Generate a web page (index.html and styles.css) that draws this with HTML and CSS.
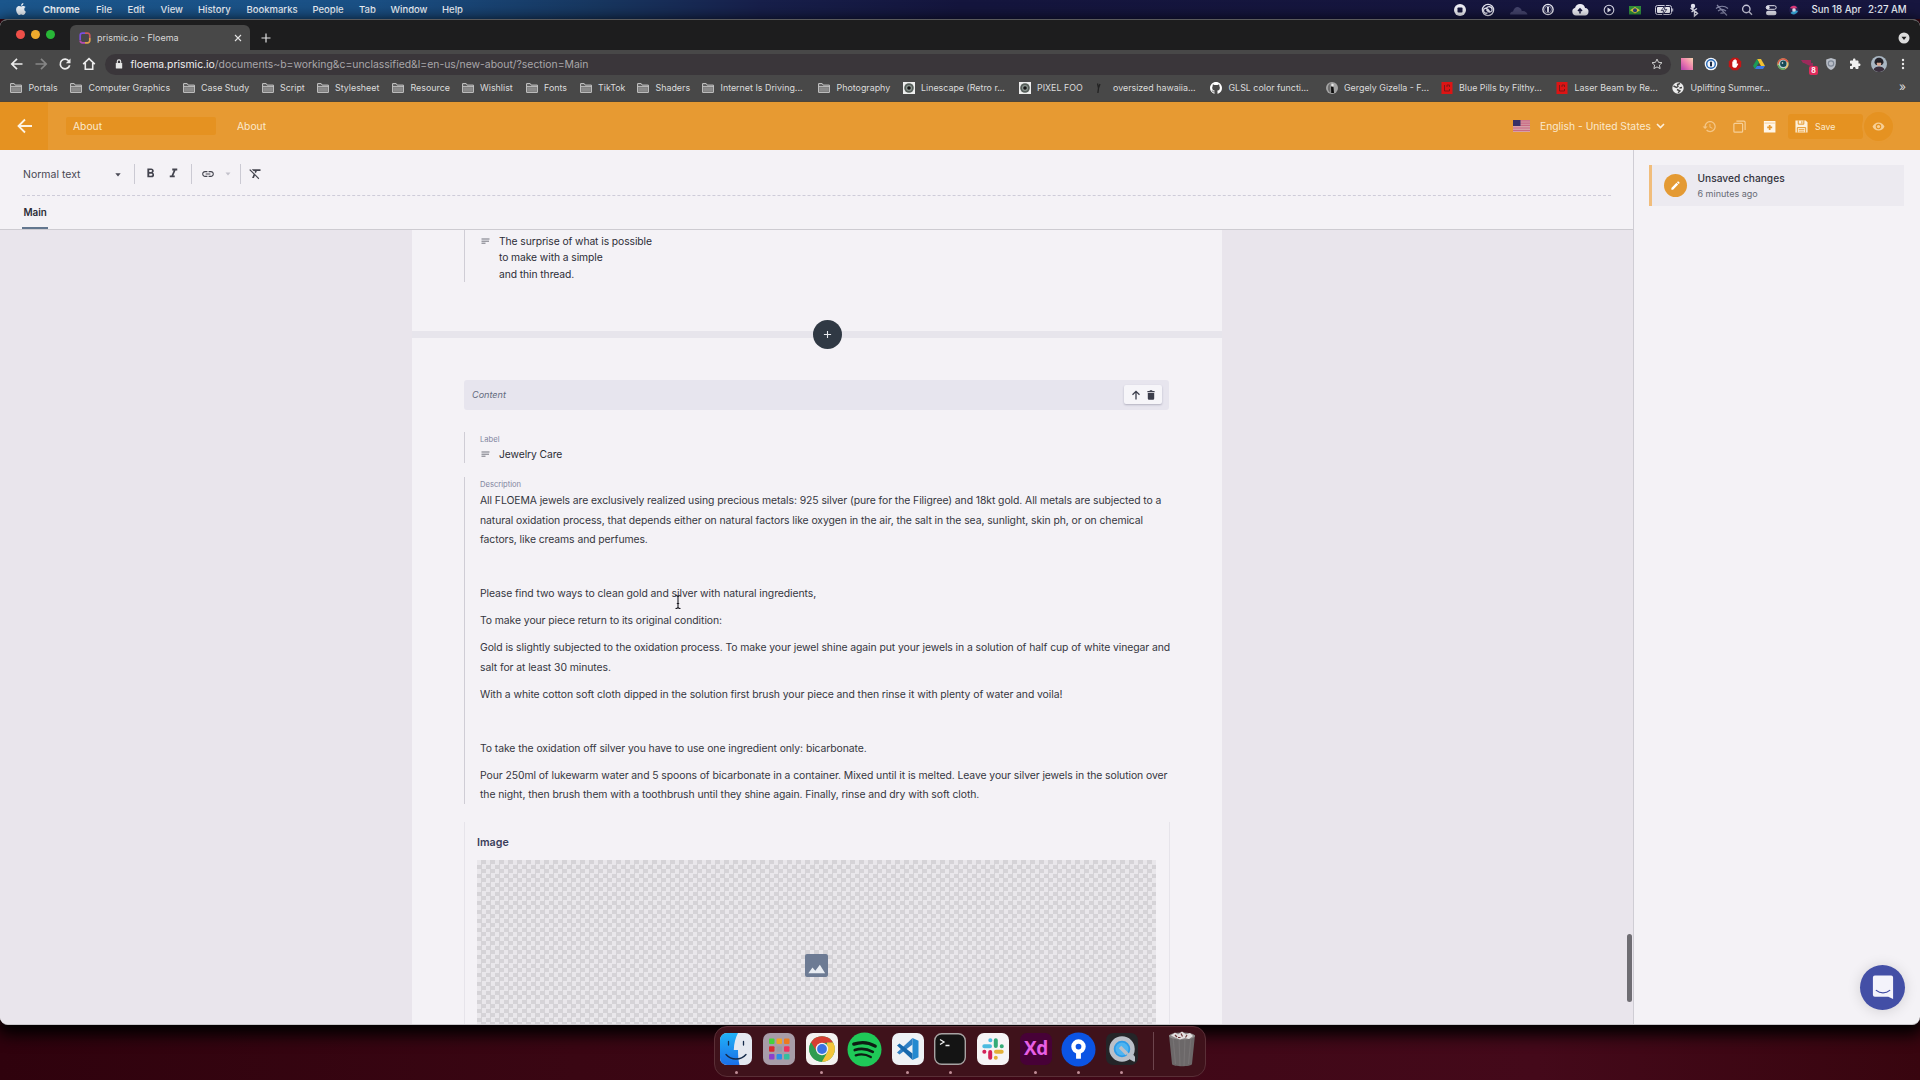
FILE: index.html
```html
<!DOCTYPE html>
<html lang="en">
<head>
<meta charset="utf-8">
<title>prismic.io - Floema</title>
<link rel="stylesheet" href="styles.css">
</head>
<body>
<svg class="defs" aria-hidden="true">
  <symbol id="folder" viewBox="0 0 12 12"><path d="M.6 10.400V1.600h3.600l1 1.500h6.200v7.300z" fill="#5c5c5c" stroke="#c9c9c9" stroke-width="1"/><path d="M1 4.600h10.500" stroke="#c9c9c9" stroke-width=".9"/><path d="M1.200 5.200h9.600v4.600H1.200z" fill="#8a8a8a"/></symbol>
  <symbol id="eyeicon" viewBox="0 0 12 12"><path d="M0 0h12v12H0z" fill="#eee"/><circle cx="6" cy="6" r="4.800" fill="#555d58"/><circle cx="6" cy="6" r="3" fill="#8b9590"/><circle cx="6" cy="6" r="1.800" fill="#161616"/></symbol>
  <symbol id="redbox" viewBox="0 0 12 12"><path d="M.5 0h11v12H.5z" fill="#dc1414"/><path d="M3.500 3v6h5V7M8.500 5V3H6v2" fill="none" stroke="#7d1717" stroke-width="1"/></symbol>
  <symbol id="onep" viewBox="0 0 16 16"><circle cx="8" cy="8" r="6.300" fill="none" stroke="currentColor" stroke-width="1.700"/><rect x="6.900" y="4.200" width="2.200" height="7.600" rx="1" fill="currentColor"/><circle cx="8" cy="8" r="4.300" fill="none" stroke="currentColor" stroke-width=".6"/></symbol>
  <symbol id="lines" viewBox="0 0 9 8"><path d="M.5 2h8M.5 4.200h7.500M.5 6.200h4" stroke="#73757f" stroke-width="1"/></symbol>
</svg>

<header class="menubar">
  <nav class="menus">
    <svg class="apple" viewBox="0 0 24 24" fill="#eaf0f7"><path d="M12.152 6.896c-.948 0-2.415-1.078-3.960-1.040-2.040.027-3.910 1.183-4.961 3.014-2.117 3.675-.546 9.103 1.519 12.090 1.013 1.454 2.208 3.090 3.792 3.039 1.520-.065 2.090-.987 3.935-.987 1.831 0 2.350.987 3.960.948 1.637-.026 2.676-1.480 3.676-2.948 1.156-1.688 1.636-3.325 1.662-3.415-.039-.013-3.182-1.221-3.220-4.857-.026-3.040 2.480-4.494 2.597-4.559-1.429-2.090-3.623-2.324-4.390-2.376-2-.156-3.675 1.090-4.610 1.090zM15.530 3.830c.843-1.012 1.400-2.427 1.245-3.830-1.207.052-2.662.805-3.532 1.818-.780.896-1.454 2.338-1.273 3.714 1.338.104 2.715-.688 3.559-1.701"/></svg>
    <b>Chrome</b><span>File</span><span>Edit</span><span>View</span><span>History</span><span>Bookmarks</span><span>People</span><span>Tab</span><span>Window</span><span>Help</span>
  </nav>
  <div class="status">
    <svg viewBox="0 0 20 16"><circle cx="10" cy="8" r="6" fill="#f1f1f8"/><rect x="7.500" y="5.500" width="5" height="5" rx=".8" fill="#16163d"/></svg>
    <svg viewBox="0 0 20 16" fill="none" stroke="#e4e4f0"><circle cx="10" cy="8" r="5.600" stroke-width="1.300"/><path d="M9.500 10.800a2.600 2.600 0 01-4-2.300c0-2.300 2.800-3 4.300-1.300l2.200 2.600M8.500 6.300c1.300-2.400 5-2 5.600.7.500 2.500-2.500 4-4.200 2.200L8.300 7.600" stroke-width="1.300"/></svg>
    <svg viewBox="0 0 20 16" fill="#44446c"><path d="M1 12.500c0-2 1.500-3 3-3C5 6 8 3.500 11 6c1.300 1 1.700 2 1.700 3.200 3-.6 5.500 1 5.800 3.300z"/></svg>
    <svg class="onepass" viewBox="0 0 16 16" color="#ececf6"><use href="#onep"/></svg>
    <svg viewBox="0 0 20 16"><path d="M6 13.500a4 4 0 01-.9-7.800 5.200 5.200 0 0110 .4 3.700 3.700 0 01-.6 7.400z" fill="#f1f1f8"/><path d="M10 11.500V7.500M8 9l2-2.200L12 9" fill="none" stroke="#16163d" stroke-width="1.500"/></svg>
    <svg viewBox="0 0 20 16"><circle cx="10" cy="8" r="4.800" fill="none" stroke="#dcdcec" stroke-width="1.100"/><path d="M8.500 5.500L12.300 8 8.500 10.500z" fill="#ececf6"/></svg>
    <svg viewBox="0 0 20 16"><path d="M4 4h12v8.500H4z" fill="#2f8f3c"/><path d="M10 5l5 3.200-5 3.200-5-3.200z" fill="#e2cf3b"/><circle cx="10" cy="8.200" r="2" fill="#2a3a86"/></svg>
    <svg viewBox="0 0 20 16"><rect x="1.500" y="3.500" width="16" height="9" rx="2" fill="none" stroke="#cfcfe0"/><rect x="3" y="5" width="13" height="6" rx="1" fill="#f1f1f8"/><path d="M11.500 3L7.200 8.600h2.500L8.500 13l4.300-5.600h-2.500z" fill="#f1f1f8" stroke="#16163d" stroke-width=".8"/><path d="M18.700 6.500v3" stroke="#cfcfe0"/></svg>
    <svg viewBox="0 0 20 16" fill="none" stroke="#e6e6f2" stroke-width="1.400"><circle cx="9" cy="4" r="1.500" fill="#e6e6f2"/><path d="M6.500 6l5.500 4.500M9 5.500V9l4-2.500M9 9l-1.500 1M10.500 9.500v4.500l3-2.500-2-2"/></svg>
    <svg viewBox="0 0 20 16" fill="none" stroke="#8688a8" stroke-width="1.200"><path d="M4 6.500c3.500-3 8.500-3 12 0M6 9c2.400-2 5.600-2 8 0M8.500 11.500c1-.8 2-.8 3 0M5 3l10 10.500"/></svg>
    <svg viewBox="0 0 20 16" fill="none" stroke="#c9c9dc" stroke-width="1.400"><circle cx="9.300" cy="7" r="3.700"/><path d="M12 9.800l3 3"/></svg>
    <svg viewBox="0 0 20 16"><rect x="5.200" y="3.700" width="10" height="3.600" rx="1.800" fill="none" stroke="#e6e6f2"/><circle cx="7" cy="5.500" r="1.700" fill="#e6e6f2"/><rect x="5" y="8.800" width="10.500" height="4.400" rx="2.200" fill="#e6e6f2"/></svg>
    <svg viewBox="0 0 20 16"><circle cx="10" cy="8" r="4.700" fill="#2b2358"/><path d="M6 6c2-3 6-3 7 0l-3 1z" fill="#e2387a"/><path d="M6.500 11c2 2.500 6 1.500 7.500-2l-4-1z" fill="#3bb3e8"/><circle cx="10" cy="8" r="1.800" fill="#e9e9fa"/></svg>
    <span>Sun 18 Apr</span><span>2:27 AM</span>
  </div>
</header>

<main class="window">
  <div class="tabstrip">
    <div class="lights"><i></i><i></i><i></i></div>
    <div class="tab">
      <svg class="favicon" viewBox="0 0 12 12" fill="none" stroke-width="1.700"><path d="M1.200 8V3.500a2.300 2.300 0 012.300-2.300H6" stroke="#7a4fe0"/><path d="M6 1.200h2.500a2.300 2.300 0 012.300 2.300V6" stroke="#c9585a"/><path d="M10.800 6v2.500a2.300 2.300 0 01-2.300 2.300H6" stroke="#e0a24a"/><path d="M6 10.800H3.500a2.300 2.300 0 01-2.300-2.300" stroke="#b64bb0"/></svg>
      <span>prismic.io - Floema</span>
      <svg class="close" viewBox="0 0 8 8"><path d="M1 1l6 6M7 1L1 7" stroke="#e2e2e2" stroke-width="1.100"/></svg>
    </div>
    <svg class="plus" viewBox="0 0 10 10"><path d="M5 .5v9M.5 5h9" stroke="#e2e2e2" stroke-width="1.200"/></svg>
    <svg class="tabmenu" viewBox="0 0 12 12"><circle cx="6" cy="6" r="5.500" fill="#dcdcdc"/><path d="M3.500 4.800h5L6 8z" fill="#1d1d1e"/></svg>
  </div>

  <div class="toolbar">
    <div class="nav">
      <svg viewBox="0 0 24 24" fill="none" stroke="#ececec" stroke-width="1.700"><path d="M17.500 12H7M12 6.800L6.800 12l5.200 5.200"/></svg>
      <svg viewBox="0 0 24 24" fill="none" stroke="#868686" stroke-width="1.700"><path d="M6.500 12H17M12 6.800l5.200 5.200-5.200 5.200"/></svg>
      <svg viewBox="0 0 24 24" fill="none" stroke="#ececec" stroke-width="1.700"><path d="M16 9.200a4.800 4.800 0 10.700 4"/><path d="M17.500 6.500v4.700h-4.700z" fill="#ececec" stroke="none"/></svg>
      <svg viewBox="0 0 24 24" fill="none" stroke="#ececec" stroke-width="1.600"><path d="M6.200 12.200L12 6.700l5.800 5.500M8.300 11v6.200h7.400V11"/></svg>
    </div>
    <div class="url">
      <svg class="lock" viewBox="0 0 8 10"><rect x=".8" y="4" width="6.400" height="5.500" rx=".6" fill="#e6e6e6"/><path d="M2.300 4V2.600a1.700 1.700 0 013.400 0V4" fill="none" stroke="#e6e6e6" stroke-width="1.100"/></svg>
      <span class="domain">floema.prismic.io</span><span class="path">/documents~b=working&amp;c=unclassified&amp;l=en-us/new-about/?section=Main</span>
      <svg class="star" viewBox="0 0 12 12"><path d="M6 1.100l1.500 3.200 3.500.4-2.600 2.400.7 3.500L6 8.900l-3.100 1.700.7-3.500L1 4.700l3.500-.4z" fill="none" stroke="#cfcfcf"/></svg>
    </div>
    <div class="exts">
      <svg viewBox="0 0 24 24"><defs><linearGradient id="pk" x1="0" y1="1" x2="1" y2="0"><stop offset="0" stop-color="#b53fae"/><stop offset=".5" stop-color="#ee7fae"/><stop offset="1" stop-color="#f9d3b0"/></linearGradient></defs><path d="M6 6h12v12H6z" fill="url(#pk)"/></svg>
      <svg viewBox="0 0 24 24"><circle cx="12" cy="12" r="6.300" fill="#f3f6fb"/><circle cx="12" cy="12" r="4.300" fill="#f3f6fb" stroke="#2768b5" stroke-width="1.400"/><rect x="11" y="9.500" width="2" height="5" rx=".8" fill="#1b2c48"/></svg>
      <svg viewBox="0 0 24 24"><path d="M9.500 5.800h5l3.700 3.700v5l-3.700 3.700h-5l-3.700-3.700v-5z" fill="#c31616"/><path d="M9.300 12V9.500h1V8h1.200v-.700h1.200v1h1.100v4l1-1 .5.600-1.800 3.400c-1.300 1-3.300.6-4.200-1z" fill="#fff"/></svg>
      <svg viewBox="0 0 24 24"><path d="M10 7h4l4 7h-4z" fill="#f1c232"/><path d="M10 7l2 3.500L8 17l-2-3z" fill="#1a9c57"/><path d="M10 14h8l-2 3H8z" fill="#3b78e7"/></svg>
      <svg viewBox="0 0 24 24"><circle cx="12" cy="12" r="5.700" fill="#e5c16e"/><path d="M6.400 12a5.700 5.700 0 0111-2z" fill="#db5a45"/><path d="M6.500 13a5.700 5.700 0 008 4.300L12 12z" fill="#57a860"/><circle cx="12" cy="12" r="4.200" fill="#b9ced2"/><circle cx="12.300" cy="11.800" r="3.200" fill="#174a55"/><circle cx="11.500" cy="11" r=".8" fill="#fff"/></svg>
      <div class="badged"><svg viewBox="0 0 24 24"><path d="M6 8h10v3H8zM9 11h9v3.500l-4-1z" fill="#9c2a5b"/></svg><b>8</b></div>
      <svg viewBox="0 0 24 24"><path d="M12 6l4.800 1.500v4c0 3-2 5.300-4.800 6.500-2.800-1.200-4.800-3.500-4.800-6.500v-4z" fill="#b9bec7"/><circle cx="12" cy="11.500" r="2.700" fill="none" stroke="#7f8896" stroke-width="1.200"/></svg>
      <svg viewBox="0 0 24 24"><g transform="translate(6 6) scale(.5)" fill="#f0f0f0"><path d="M20.500 11H19V7c0-1.100-.9-2-2-2h-4V3.500C13 2.120 11.880 1 10.500 1S8 2.120 8 3.500V5H4c-1.100 0-1.990.9-1.990 2v3.800H3.500c1.490 0 2.700 1.210 2.700 2.700s-1.210 2.700-2.700 2.700H2V20c0 1.100.9 2 2 2h3.800v-1.500c0-1.490 1.210-2.700 2.700-2.700 1.490 0 2.700 1.210 2.700 2.700V22H17c1.100 0 2-.9 2-2v-4h1.500c1.380 0 2.500-1.120 2.500-2.500S21.880 11 20.500 11z"/></g></svg>
      <svg viewBox="0 0 24 24"><circle cx="12" cy="12" r="8" fill="#a9b6c2"/><path d="M7.500 11c-.5-7 9.500-7 9 0l-1.500 2H9z" fill="#25232a"/><circle cx="12" cy="11.800" r="2.300" fill="#d8a892"/><path d="M6.500 17.500c1.500-4 9.500-4 11 0-3 3.300-8 3.300-11 0z" fill="#3a2f3d"/><path d="M8.500 10.500c0-3 7-3 7 0l-3.500.3z" fill="#1d1b21"/></svg>
      <svg viewBox="0 0 24 24" fill="#ececec"><circle cx="12" cy="8" r="1.200"/><circle cx="12" cy="12" r="1.200"/><circle cx="12" cy="16" r="1.200"/></svg>
    </div>
  </div>

  <nav class="bookmarks">
    <a><svg><use href="#folder"/></svg>Portals</a>
    <a><svg><use href="#folder"/></svg>Computer Graphics</a>
    <a><svg><use href="#folder"/></svg>Case Study</a>
    <a><svg><use href="#folder"/></svg>Script</a>
    <a><svg><use href="#folder"/></svg>Stylesheet</a>
    <a><svg><use href="#folder"/></svg>Resource</a>
    <a><svg><use href="#folder"/></svg>Wishlist</a>
    <a><svg><use href="#folder"/></svg>Fonts</a>
    <a><svg><use href="#folder"/></svg>TikTok</a>
    <a><svg><use href="#folder"/></svg>Shaders</a>
    <a><svg><use href="#folder"/></svg>Internet Is Driving...</a>
    <a><svg><use href="#folder"/></svg>Photography</a>
    <a><svg><use href="#eyeicon"/></svg>Linescape (Retro r...</a>
    <a><svg><use href="#eyeicon"/></svg>PIXEL FOO</a>
    <a><svg viewBox="0 0 12 12"><path d="M2.500 1.500l1 4.500-.6 5M5 2L3.500 6" stroke="#222" stroke-width="1.300" fill="none"/></svg>oversized hawaiia...</a>
    <a><svg viewBox="0 0 16 16" fill="#fff"><path d="M8 0C3.580 0 0 3.580 0 8c0 3.540 2.290 6.530 5.470 7.590.4.070.55-.170.55-.380 0-.190-.010-.820-.010-1.490-2.010.370-2.530-.490-2.690-.940-.090-.230-.480-.940-.820-1.130-.280-.150-.680-.520-.010-.530.630-.010 1.080.580 1.230.820.720 1.210 1.870.870 2.330.660.070-.520.280-.870.510-1.070-1.780-.2-3.640-.890-3.640-3.950 0-.870.310-1.590.820-2.150-.080-.2-.360-1.020.080-2.120 0 0 .670-.210 2.200.820.640-.180 1.320-.270 2-.270s1.360.090 2 .270c1.530-1.040 2.200-.820 2.200-.820.440 1.100.160 1.920.080 2.120.510.560.820 1.270.820 2.150 0 3.070-1.870 3.750-3.650 3.950.290.250.540.730.540 1.480 0 1.070-.010 1.930-.010 2.200 0 .210.150.460.550.380A8.010 8.010 0 0016 8c0-4.420-3.580-8-8-8z"/></svg>GLSL color functi...</a>
    <a><svg viewBox="0 0 12 12"><circle cx="6" cy="6" r="6" fill="#a4a4a4"/><path d="M4.500 1a6 6 0 000 10z" fill="#6d6d6d"/><path d="M5 4.500l2.500.5.500 6H5.200z" fill="#0c0c0c"/><circle cx="6.500" cy="3" r="1.200" fill="#e8e8e8"/></svg>Gergely Gizella - F...</a>
    <a><svg><use href="#redbox"/></svg>Blue Pills by Filthy...</a>
    <a><svg><use href="#redbox"/></svg>Laser Beam by Re...</a>
    <a><svg viewBox="0 0 12 12"><circle cx="6" cy="6" r="5.700" fill="#ececec"/><path d="M1.500 4l3 1.500 1.500-1-.5-2L8 1.500M7.500 6L10 5.500M5 7.500L8 9l-2 1.800" fill="none" stroke="#474747" stroke-width="1.400"/></svg>Uplifting Summer...</a>
    <span class="more">»</span>
  </nav>

  <div class="docbar">
    <div class="back"><svg viewBox="0 0 16 16"><path d="M15 8H2M8 1.500L1.500 8 8 14.500" fill="none" stroke="#fdf3e2" stroke-width="1.800"/></svg></div>
    <div class="uid">About</div>
    <div class="doctitle">About</div>
    <div class="lang">
      <svg class="flag" viewBox="0 0 17 12"><path d="M0 0h17v12H0z" fill="#d69fa6"/><path d="M0 .9h17M0 3.100h17M0 5.300h17M0 8h17M0 10.500h17" stroke="#c96a84" stroke-width="1.200"/><path d="M0 0h7.500v6H0z" fill="#373066"/></svg>
      <span>English - United States</span>
      <svg class="chev" viewBox="0 0 9 6"><path d="M1 1l3.500 3.500L8 1" fill="none" stroke="#fdf0dc" stroke-width="1.600"/></svg>
    </div>
    <div class="actions">
      <svg viewBox="0 0 24 24" fill="#f4c585"><path d="M13 3c-4.970 0-9 4.030-9 9H1l3.890 3.890.07.14L9 12H6c0-3.870 3.130-7 7-7s7 3.130 7 7-3.130 7-7 7c-1.930 0-3.680-.79-4.940-2.060l-1.420 1.420C8.270 19.990 10.510 21 13 21c4.970 0 9-4.030 9-9s-4.030-9-9-9zm-1 5v5l4.280 2.540.72-1.210-3.500-2.080V8H12z"/></svg>
      <svg viewBox="0 0 24 24" fill="none" stroke="#f6cf98" stroke-width="1.900"><rect x="3" y="7" width="14" height="14" rx="1.500"/><path d="M7 3.500h12a2 2 0 012 2v12"/></svg>
      <svg viewBox="0 0 24 24"><path d="M3 3h18.500v18.500H3z" fill="#fff6e8"/><path d="M4 6.500h16.500" stroke="#efb566" stroke-width="1"/><path d="M12.300 9.500v8M8.300 13.500h8" stroke="#e79a31" stroke-width="2.800"/></svg>
    </div>
    <div class="save">
      <svg viewBox="0 0 14 14"><path d="M.5.500h11l2 2v11H.5z" fill="#fdf0da"/><path d="M3.500.500v4h6v-4M2.500 13.500V8.200h9v5.300" fill="none" stroke="#e5921f" stroke-width="1"/><path d="M4 10.200h6M4 12h6" stroke="#e5921f" stroke-width=".8"/><path d="M7.400 1.300v2.500" stroke="#e5921f"/></svg>
      <span>Save</span>
    </div>
    <div class="preview"><svg viewBox="0 0 24 24"><path d="M12 4.500C7 4.500 2.730 7.610 1 12c1.730 4.390 6 7.500 11 7.500s9.270-3.110 11-7.500c-1.730-4.390-6-7.500-11-7.500z" fill="#f7cf96"/><circle cx="12" cy="12" r="5" fill="#e5921f"/><circle cx="12" cy="12" r="3" fill="#f7cf96"/></svg></div>
  </div>

  <div class="workspace">
    <section class="editor">
      <div class="tools">
        <div class="format">
          <span class="style">Normal text</span>
          <svg class="caret" viewBox="0 0 6 4"><path d="M.3.300h5.400L3 3.500z" fill="#4a4a55"/></svg>
          <i class="sep"></i>
          <svg class="ic bold" viewBox="0 0 24 24"><path d="M15.600 10.790c.97-.67 1.650-1.770 1.650-2.790 0-2.260-1.750-4-4-4H7v14h7.040c2.090 0 3.710-1.700 3.710-3.790 0-1.520-.86-2.820-2.150-3.420zM10 6.500h3c.83 0 1.500.67 1.500 1.500s-.67 1.500-1.500 1.500h-3v-3zm3.500 9H10v-3h3.500c.83 0 1.500.67 1.500 1.500s-.67 1.500-1.500 1.500z"/></svg>
          <svg class="ic italic" viewBox="0 0 24 24"><path d="M10 4v3h2.210l-3.420 8H6v3h8v-3h-2.210l3.420-8H18V4z"/></svg>
          <i class="sep s2"></i>
          <svg class="ic link" viewBox="0 0 24 24"><path d="M3.900 12c0-1.710 1.390-3.100 3.100-3.100h4V7H7c-2.760 0-5 2.240-5 5s2.240 5 5 5h4v-1.900H7c-1.710 0-3.100-1.390-3.100-3.100zM8 13h8v-2H8v2zm9-6h-4v1.900h4c1.710 0 3.100 1.390 3.100 3.100s-1.390 3.100-3.100 3.100h-4V17h4c2.760 0 5-2.240 5-5s-2.240-5-5-5z"/></svg>
          <svg class="caret dim" viewBox="0 0 6 4"><path d="M.5.500h5L3 3.500z" fill="#c3c2cb"/></svg>
          <i class="sep s3"></i>
          <svg class="ic clear" viewBox="0 0 24 24"><path d="M3.270 5L2 6.270l6.970 6.970L6.500 19h3l1.570-3.660L16.730 21 18 19.730 3.550 5.270 3.270 5zM6 5v.18L8.820 8h2.400l-.72 1.680 2.100 2.100L14.210 8H20V5H6z"/></svg>
        </div>
        <div class="sections"><span>Main</span></div>
      </div>

      <div class="canvas">
        <article class="paper">
          <div class="field quote">
            <div class="para"><svg class="ln"><use href="#lines"/></svg><span>The surprise of what is possible<br>to make with a simple<br>and thin thread.</span></div>
          </div>
          <div class="divider"><button><svg viewBox="0 0 10 10"><path d="M5 1v8M1 5h8" stroke="#e8eaee" stroke-width="1.200"/></svg></button></div>
          <div class="slice">
            <em>Content</em>
            <div class="slicebtns">
              <svg viewBox="0 0 10 10"><path d="M5 9.500V1.500M1.500 4.800L5 1.300l3.500 3.500" fill="none" stroke="#3c3e4c" stroke-width="1.300"/></svg>
              <svg viewBox="0 0 10 10"><path d="M1.800 3h6.400v5.500a1.200 1.200 0 01-1.200 1.200H3a1.200 1.200 0 01-1.200-1.200zM1.400 1h2.100l.5-.7h2l.5.700h2.100v1.200H1.400z" fill="#3c3e4c"/></svg>
            </div>
          </div>
          <div class="field labelfield">
            <label>Label</label>
            <div class="para"><svg class="ln"><use href="#lines"/></svg><span>Jewelry Care</span></div>
          </div>
          <div class="field description">
            <label>Description</label>
            <p>All FLOEMA jewels are exclusively realized using precious metals: 925 silver (pure for the Filigree) and 18kt gold. All metals are subjected to a<br>natural oxidation process, that depends either on natural factors like oxygen in the air, the salt in the sea, sunlight, skin ph, or on chemical<br>factors, like creams and perfumes.</p>
            <p>&nbsp;</p>
            <p>Please find two ways to clean gold and silver with natural ingredients,</p>
            <p>To make your piece return to its original condition:</p>
            <p>Gold is slightly subjected to the oxidation process. To make your jewel shine again put your jewels in a solution of half cup of white vinegar and<br>salt for at least 30 minutes.</p>
            <p>With a white cotton soft cloth dipped in the solution first brush your piece and then rinse it with plenty of water and voila!</p>
            <p>&nbsp;</p>
            <p>To take the oxidation off silver you have to use one ingredient only: bicarbonate.</p>
            <p>Pour 250ml of lukewarm water and 5 spoons of bicarbonate in a container. Mixed until it is melted. Leave your silver jewels in the solution over<br>the night, then brush them with a toothbrush until they shine again. Finally, rinse and dry with soft cloth.</p>
            <svg class="ibeam" viewBox="0 0 8 16"><path d="M1.500 1.500c1.500 0 2.500.3 2.500 1.500v10c0 1.200-1 1.500-2.500 1.500M6.500 1.500C5 1.500 4 1.800 4 3M6.500 14.500C5 14.500 4 14.200 4 13M2.800 9.500h2.400" fill="none" stroke="#1b1b22" stroke-width="1.100"/></svg>
          </div>
          <div class="imagefield">
            <h4>Image</h4>
            <div class="checker"><svg viewBox="0 0 24 24"><rect width="24" height="24" rx="2" fill="#6d7b94"/><path d="M3.500 20l4.300-6 3 3.500 4.700-6.300L21 20z" fill="#e9edf3"/></svg></div>
          </div>
        </article>
        <i class="scroll"></i>
      </div>
    </section>

    <aside class="side">
      <div class="card">
        <div class="pen"><svg viewBox="0 0 24 24" fill="#fff"><path d="M3 17.250V21h3.750L17.810 9.940l-3.750-3.750L3 17.250zM20.710 7.040a1 1 0 000-1.410l-2.340-2.340a1 1 0 00-1.410 0l-1.830 1.830 3.750 3.750 1.830-1.830z"/></svg></div>
        <div><strong>Unsaved changes</strong><small>6 minutes ago</small></div>
      </div>
      <div class="chat"><svg viewBox="0 0 22 26"><path d="M2.500.500h17a2 2 0 012 2v22.500l-5-2.500h-14a2 2 0 01-2-2v-18a2 2 0 012-2z" fill="#f4f3fb"/><path d="M4 16c4 3.400 10 3.400 14 0" fill="none" stroke="#434fa6" stroke-width="1.300" stroke-linecap="round"/></svg></div>
    </aside>
  </div>
</main>

<footer class="desktop">
  <div class="dock">
    <div class="app run"><svg viewBox="0 0 32 32"><defs><linearGradient id="fb" x1="0" y1="0" x2="0" y2="1"><stop offset="0" stop-color="#21b2f7"/><stop offset="1" stop-color="#1b6fe8"/></linearGradient></defs><rect width="32" height="32" rx="7" fill="#e4e8f0"/><path d="M7 0h11c-2.500 5-4 10-4.200 17h4.200c0 6 .5 11 1.500 15H7a7 7 0 01-7-7V7a7 7 0 017-7z" fill="url(#fb)"/><path d="M8.500 8.500v3.500M23.500 8.500v3.500M6 21.500c5 6 15 6 20 0" fill="none" stroke="#152b4a" stroke-width="1.300" stroke-linecap="round"/></svg></div>
    <div class="app"><svg viewBox="0 0 32 32"><rect width="32" height="32" rx="7" fill="#a89ca8"/><g><rect x="6" y="5.500" width="5.500" height="5.500" rx="1" fill="#45d13c"/><rect x="13.500" y="5.500" width="5.500" height="5.500" rx="1" fill="#f0a225"/><rect x="21" y="5.500" width="5.500" height="5.500" rx="1" fill="#ec7b1f"/><rect x="6" y="13.300" width="5.500" height="5.500" rx="1" fill="#d92b30"/><rect x="13.500" y="13.300" width="5.500" height="5.500" rx="1" fill="#9a9aa2"/><rect x="21" y="13.300" width="5.500" height="5.500" rx="1" fill="#ef3260"/><rect x="6" y="21" width="5.500" height="5.500" rx="1" fill="#8c40cc"/><rect x="13.500" y="21" width="5.500" height="5.500" rx="1" fill="#2d8fe5"/><rect x="21" y="21" width="5.500" height="5.500" rx="1" fill="#34bf9e"/></g></svg></div>
    <div class="app run"><svg viewBox="0 0 32 32"><rect width="32" height="32" rx="7" fill="#f4f2f1"/><circle cx="16" cy="16" r="12.800" fill="#2f9c50"/><path d="M16 16L4.900 9.600A12.800 12.800 0 0127.100 9.600L16 10z" fill="#d63e32"/><path d="M4.900 9.600L11 19l5-3V9z" fill="#d63e32"/><path d="M4.900 9.600a12.800 12.800 0 0011 19.200L21.500 19 11 19z" fill="#2f9c50"/><path d="M27.100 9.600A12.800 12.800 0 0115.900 28.800L21.500 19 21 9.600z" fill="#f3c43a"/><circle cx="16" cy="16" r="6.200" fill="#f4f2f1"/><circle cx="16" cy="16" r="4.900" fill="#3b72e3"/></svg></div>
    <div class="app"><svg class="round" viewBox="0 0 36 36"><circle cx="18" cy="18" r="17.500" fill="#1fc958"/><path d="M7 12.500c7-2.500 15.500-1.800 22 2" fill="none" stroke="#0d1d13" stroke-width="3.400" stroke-linecap="round"/><path d="M8 18.500c6-2 13-1.200 18.500 2" fill="none" stroke="#0d1d13" stroke-width="2.800" stroke-linecap="round"/><path d="M9 24c5-1.500 11-.8 15.500 1.800" fill="none" stroke="#0d1d13" stroke-width="2.300" stroke-linecap="round"/></svg></div>
    <div class="app run"><svg viewBox="0 0 32 32"><rect width="32" height="32" rx="7" fill="#eef1f5"/><path d="M20.500 5l6 2.700v16.600l-6 2.700z" fill="#2489d0"/><path d="M20.500 5v6.500L7.500 21.500 5 19.600z" fill="#2f7fc4"/><path d="M20.500 27v-6.500L7.500 10.500 5 12.400z" fill="#1668ad"/></svg></div>
    <div class="app run"><svg viewBox="0 0 32 32"><rect x=".7" y=".7" width="30.600" height="30.600" rx="7" fill="#141414" stroke="#a8a3a3" stroke-width="1.400"/><path d="M6 6.500l4 2.500-4 2.500M11.500 12.500h4" fill="none" stroke="#f2f2f2" stroke-width="1.300"/></svg></div>
    <div class="app"><svg viewBox="0 0 32 32"><rect width="32" height="32" rx="7" fill="#f6f4f6"/><g stroke-width="4" stroke-linecap="round"><path d="M7.300 13.200h5.700M13.300 7.300h.1" stroke="#4cbbe0"/><path d="M18.800 7.300v5.700M24.700 13.200h.1" stroke="#34ab78"/><path d="M24.700 18.800H19M18.800 24.700v.1" stroke="#e5b136"/><path d="M13.200 24.700V19M7.300 18.800h.1" stroke="#d32158"/></g></svg></div>
    <div class="app run"><div class="xd">Xd</div></div>
    <div class="app run"><svg class="round" viewBox="0 0 36 36"><circle cx="18" cy="18" r="17.500" fill="#0b54e4"/><circle cx="18" cy="15" r="5.200" fill="none" stroke="#fff" stroke-width="4.500"/><path d="M15.500 19.500h5v8h-5z" fill="#fff"/></svg></div>
    <div class="app run"><svg viewBox="0 0 32 32"><rect width="32" height="32" rx="7" fill="#242528"/><circle cx="16" cy="16" r="10.500" fill="#2c9be8" stroke="#b9bfc8" stroke-width="4.500"/><circle cx="16" cy="16" r="6.500" fill="#4db4f2"/><path d="M14 14l7 7" stroke="#b9bfc8" stroke-width="3.500"/><path d="M20 20l4 6.500 3.500 2h1.500v-5l-3-3z" fill="#b9bfc8"/></svg></div>
    <i class="docksep"></i>
    <div class="app trash"><svg viewBox="0 0 28 36"><path d="M1 4l3 29c.3 3 19.700 3 20 0L27 4z" fill="#6c6869"/><path d="M5 6l2.500 27M23 6l-2.500 27M11 6l1 29M17 6l-1 29" stroke="#777374" stroke-width="1.200"/><ellipse cx="14" cy="5" rx="13" ry="3.500" fill="#8f8b8b"/><path d="M3 4.500l4-3 3 2 4-3 4 3 4-1.500 3 3-4 3-4-1-5 1.500-5-2z" fill="#e3dfdf"/><path d="M7 4l2 2M13 2.500l1.500 3M19 4l-1.500 2.500M10 6.500h2.500" stroke="#6a3436" stroke-width="1.200"/></svg></div>
  </div>
</footer>
</body>
</html>
```
FILE: styles.css
```css
* { box-sizing: border-box; }
body {
  margin: 0;
  width: 1920px;
  height: 1080px;
  overflow: hidden;
  display: flex;
  flex-direction: column;
  font-family: "Inter", "Liberation Sans", sans-serif;
  background: #3c0612;
  white-space: nowrap;
}
svg { display: block; flex: none; }
.defs { position: absolute; width: 0; height: 0; }

/* macOS menu bar */
.menubar {
  height: 19px;
  flex: none;
  display: flex;
  justify-content: space-between;
  align-items: center;
  background: linear-gradient(90deg, #1b568c 0, #1a5085 360px, #17365f 600px, #171f4a 760px, #14153d 960px, #17163f 100%);
  color: #eaf0f7;
  font-size: 9.500px;
  font-weight: 500;
}
.menus {
  display: grid;
  grid-template-columns: 28px 53px 31.500px 33px 37.500px 48.500px 66px 46.500px 31.500px 51.500px 40px;
  align-items: center;
  padding-left: 15px;
  height: 18px;
}
.menus b { font-weight: 700; }
.apple { width: 12px; height: 12px; margin-top: -1px; }
.status {
  display: grid;
  grid-template-columns: 28px 31px 29px 32px 28.500px 26.500px 29px 30px 28px 25px 24px 23px 27.500px 56.500px 52px;
  align-items: center;
  height: 18px;
}
.status svg { width: 20px; height: 16px; }
.status .onepass { height: 13px; }
.status span { font-size: 9.700px; }

/* browser window */
.window {
  height: 1006px;
  flex: none;
  display: flex;
  flex-direction: column;
  border-top: 1px solid #5a5a5c;
  border-bottom: 1px solid #c9c7cb;
  border-radius: 7px 7px 8px 8px;
  overflow: hidden;
  background: #f4f2f6;
  position: relative;
  z-index: 1;
  box-shadow: 0 6px 16px 4px #000;
}
.tabstrip {
  height: 30px;
  flex: none;
  display: flex;
  align-items: center;
  background: #1d1d1e;
}
.lights { display: flex; gap: 6px; width: 70px; padding: 0 0 1px 16px; }
.lights i { width: 9px; height: 9px; border-radius: 50%; background: #ee4f48; }
.lights i:nth-child(2) { background: #efab2d; }
.lights i:nth-child(3) { background: #28b737; }
.tab {
  align-self: flex-end;
  width: 180px;
  height: 25px;
  display: flex;
  align-items: center;
  padding: 0 8px 0 9px;
  background: #484848;
  border-radius: 6px 6px 0 0;
  color: #d8d8d8;
  font-size: 9px;
}
.favicon { width: 12px; height: 12px; margin-right: 6px; }
.close { width: 8px; height: 8px; margin-left: auto; }
.plus { width: 10px; height: 10px; margin-left: 11px; }
.tabmenu { width: 12px; height: 12px; margin: 5px 10px 0 auto; }
.tabstrip .plus { margin-top: 5px; }

.toolbar {
  height: 27px;
  flex: none;
  display: flex;
  align-items: center;
  background: #484848;
}
.nav { display: flex; padding-left: 4.500px; width: 105px; }
.nav svg { width: 24px; height: 24px; }
.url {
  width: 1566px;
  height: 21px;
  margin-top: 1px;
  display: flex;
  align-items: center;
  padding: 0 8px 0 9.500px;
  background: #3a363a;
  border-radius: 11px;
  color: #a9a7aa;
  font-size: 10.400px;
}
.lock { width: 8px; height: 10px; margin-right: 8px; }
.domain { color: #f0f0f0; }
.star { width: 12px; height: 12px; margin-left: auto; }
.exts { display: flex; padding-left: 4px; }
.exts svg { width: 24px; height: 24px; }
.badged { position: relative; }
.badged b {
  position: absolute;
  left: 14px;
  top: 14px;
  width: 9px;
  height: 9px;
  border-radius: 2px;
  background: #df2b5b;
  color: #fff;
  font-size: 7px;
  line-height: 9px;
  text-align: center;
}

.bookmarks {
  height: 25px;
  flex: none;
  display: grid;
  grid-template-columns: 60px 112.500px 79px 55px 75.500px 69.500px 64px 54px 57.500px 65px 116px 84.500px 116px 76px 115.500px 115.500px 115px 115.500px 116px 227px 20px;
  align-items: center;
  padding: 0 0 3px 10px;
  background: #484848;
  border-bottom: 1px solid #4e4538;
  color: #dcdcdc;
  font-size: 8.900px;
}
.bookmarks a { display: flex; align-items: center; gap: 6.500px; }
.bookmarks svg { width: 12px; height: 12px; }
.more { font-size: 12px; margin: -3px 0 0 0; }

/* document header */
.docbar {
  height: 48px;
  flex: none;
  display: flex;
  align-items: center;
  background: #e79a32;
  color: #fbe9cd;
  font-size: 10.300px;
}
.back {
  width: 48px;
  height: 48px;
  display: grid;
  place-items: center;
  background: #e59221;
}
.back svg { width: 16px; height: 16px; margin-left: 1px; }
.uid {
  width: 150px;
  height: 18px;
  line-height: 18px;
  margin-left: 18px;
  padding-left: 7px;
  background: #e59221;
  border-radius: 2px;
}
.doctitle { margin-left: 21px; width: 1276px; padding-bottom: 1px; }
.lang { display: flex; align-items: center; width: 189px; }
.lang span { padding-bottom: 1px; }
.flag { width: 17px; height: 12px; margin-right: 10px; }
.chev { width: 9px; height: 6px; margin-left: 5px; }
.actions { display: flex; gap: 15px; width: 86px; }
.actions svg { width: 15px; height: 15px; }
.save {
  width: 75px;
  height: 25px;
  display: flex;
  align-items: center;
  gap: 7px;
  padding-left: 7px;
  background: #e59221;
  border-radius: 3px;
  font-size: 8.800px;
}
.save svg { width: 13px; height: 13px; }
.preview {
  width: 33px;
  height: 33px;
  margin-left: -1px;
  border: 2px solid #e79a32;
  border-radius: 50%;
  display: grid;
  place-items: center;
  background: #e59221;
}
.preview svg { width: 13px; height: 13px; }

/* editor */
.workspace { flex: 1; display: flex; min-height: 0; }
.editor {
  width: 1634px;
  display: flex;
  flex-direction: column;
  border-right: 1px solid #cfcdd4;
}
.tools {
  height: 80px;
  flex: none;
  padding: 0 22px 0 22px;
  border-bottom: 1px solid #cdcbd1;
  background: #f4f2f6;
}
.format {
  height: 46px;
  display: flex;
  align-items: center;
  padding-top: 2px;
  border-bottom: 1px dashed #ceccd9;
}
.style { width: 93px; padding: 2px 0 0 1px; font-size: 10.500px; color: #484853; }
.caret { width: 6px; height: 4px; margin-top: 2px; }
.caret.dim { margin-left: 10px; margin-top: 1px; }
.sep { width: 1px; height: 20px; margin-left: 13px; background: #cbcad3; }
.s2 { margin-left: 10px; }
.s3 { margin-left: 9px; }
.ic { fill: #44454f; width: 14px; height: 14px; }
.bold { margin-left: 8px; width: 15px; height: 15px; }
.italic { margin-left: 8px; width: 15px; height: 15px; }
.link { margin-left: 9px; }
.clear { margin-left: 7px; width: 15px; height: 15px; }
.sections { height: 33px; display: flex; }
.sections span {
  height: 33px;
  line-height: 33px;
  padding: 0 1.500px;
  font-size: 9.900px;
  font-weight: 600;
  color: #2b2c36;
  border-bottom: 2px solid #63778f;
}

.canvas {
  flex: 1;
  min-height: 0;
  position: relative;
  background: #e9e5ec;
  overflow: hidden;
}
.paper {
  width: 810px;
  height: 794px;
  margin-left: 412px;
  background: #f4f2f6;
  display: flex;
  flex-direction: column;
}
.field {
  flex: none;
  width: 720px;
  margin-left: 52px;
  padding-left: 15px;
  border-left: 1px solid #cfcdd5;
  color: #353640;
  font-size: 10.400px;
  letter-spacing: -.075px;
  position: relative;
}
.para { display: flex; gap: 9px; padding-left: 1px; line-height: 16.600px; font-size: 10.300px; color: #2c2d37; }
.ln { width: 9px; height: 8px; margin-top: 4px; }
.quote { height: 52px; padding-top: 2.500px; }
.divider {
  flex: none;
  height: 7px;
  margin-top: 49px;
  background: #e7e5ec;
  display: flex;
  justify-content: center;
  align-items: center;
}
.divider button {
  width: 29px;
  height: 29px;
  margin-left: 20px;
  padding: 0;
  border: 0;
  border-radius: 50%;
  background: #303944;
  display: grid;
  place-items: center;
  flex: none;
}
.divider svg { width: 9px; height: 9px; }
.slice {
  flex: none;
  width: 705px;
  height: 30px;
  margin: 42px 0 0 52px;
  padding: 0 7px 1px 8px;
  display: flex;
  align-items: center;
  justify-content: space-between;
  background: #e7e5ee;
  border-radius: 3px;
}
.slice em { font-size: 9.100px; color: #646b7d; }
.slicebtns {
  width: 38px;
  height: 19px;
  display: flex;
  align-items: center;
  justify-content: center;
  gap: 5px;
  background: #f6f5f9;
  border-radius: 2px;
  box-shadow: 0 1px 2px rgba(60, 60, 90, .3);
}
.slicebtns svg { width: 10px; height: 10px; }
.field label { display: block; font-size: 7.600px; line-height: 12px; color: #8185a0; letter-spacing: 0; }
.labelfield { height: 31px; margin-top: 22px; padding-top: 2px; }
.description { height: 327px; margin-top: 14px; padding-top: 2px; }
.description p { margin: 0 0 7.500px; line-height: 19.500px; }
.description label { margin-bottom: .4px; }
.ibeam { position: absolute; left: 209px; top: 117px; width: 8px; height: 16px; }
.imagefield {
  flex: 1;
  width: 706px;
  margin: 18px 0 0 52px;
  padding: 0 13px 0 12px;
  border: solid #e6e4ea;
  border-width: 0 1px;
  display: flex;
  flex-direction: column;
}
.imagefield h4 { margin: 0; height: 38px; line-height: 41px; font-size: 10.700px; font-weight: 600; color: #3a3d5a; }
.checker {
  flex: 1;
  padding: 94px 0 0 328px;
  background: repeating-conic-gradient(#d5d3d7 0 25%, #e9e7eb 0 50%) 0 0 / 9px 9px;
}
.checker svg { width: 23px; height: 23px; }
.scroll {
  position: absolute;
  right: 1px;
  top: 704px;
  width: 5px;
  height: 68px;
  border-radius: 3px;
  background: #6f6d73;
}

/* sidebar */
.side {
  flex: 1;
  display: flex;
  flex-direction: column;
  justify-content: space-between;
  padding: 15px 16px 14px 15px;
}
.card {
  height: 41px;
  display: flex;
  align-items: center;
  gap: 10.500px;
  padding-left: 12px;
  border-left: 3px solid #f1bd7b;
  background: #eceaf0;
}
.pen { width: 23px; height: 23px; border-radius: 50%; background: #e49a33; display: grid; place-items: center; }
.pen svg { width: 11px; height: 11px; }
.card strong { display: block; font-size: 10.200px; font-weight: 500; line-height: 15px; color: #33343d; }
.card small { display: block; font-size: 9px; line-height: 15px; color: #686a76; }
.chat {
  width: 45px;
  height: 45px;
  margin-right: -1px;
  align-self: flex-end;
  border-radius: 50%;
  background: #434fa6;
  display: grid;
  place-items: center;
  box-shadow: 0 1px 14px rgba(0, 0, 0, .14);
}
.chat svg { width: 22px; height: 25px; }

/* desktop and dock */
.desktop {
  flex: 1;
  display: flex;
  justify-content: center;
  background: linear-gradient(90deg, #2f020d, #3a0613 30%, #44091a 80%, #38050f);
}
.dock {
  width: 492px;
  height: 51px;
  margin-top: 1px;
  display: flex;
  background: #3f121b;
  border: 1px solid #5a2f37;
  border-radius: 13px;
  position: relative;
  z-index: 2;
}
.app {
  width: 42.800px;
  height: 49px;
  flex: none;
  display: flex;
  justify-content: center;
  align-items: center;
  padding-bottom: 5px;
  position: relative;
}
.app svg { width: 32px; height: 32px; }
.app svg.round { width: 35px; height: 35px; }
.run::after {
  content: "";
  position: absolute;
  bottom: 2px;
  width: 3px;
  height: 3px;
  border-radius: 50%;
  background: #c08d97;
}
.xd {
  width: 32px;
  height: 32px;
  border-radius: 7px;
  background: #470137;
  color: #e85fe6;
  font: 700 19px/31px "Open Sans", sans-serif;
  letter-spacing: -.5px;
  text-align: center;
}
.docksep { width: 1px; height: 38px; margin: 5px 7px 0 10px; background: #6d454d; }
.app.trash svg { width: 28px; height: 36px; }
```
